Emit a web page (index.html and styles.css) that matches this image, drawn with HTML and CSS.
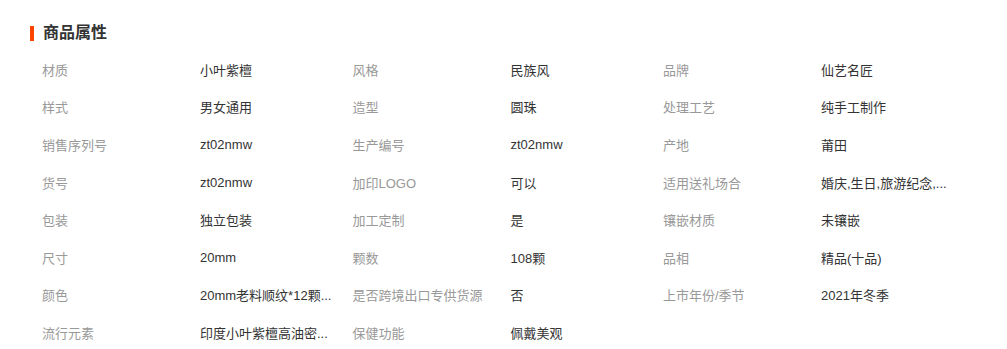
FILE: index.html
```html
<!DOCTYPE html>
<html lang="zh-CN">
<head>
<meta charset="utf-8">
<title>商品属性</title>
<link rel="stylesheet" href="styles.css">
</head>
<body>
<section class="attrs">
  <h2 class="attrs-title"><span class="attrs-bar"></span>商品属性</h2>
  <ul class="attrs-list">
    <li class="attr"><span class="attr-name">材质</span><span class="attr-value">小叶紫檀</span></li>
    <li class="attr"><span class="attr-name">风格</span><span class="attr-value">民族风</span></li>
    <li class="attr"><span class="attr-name">品牌</span><span class="attr-value">仙艺名匠</span></li>
    <li class="attr"><span class="attr-name">样式</span><span class="attr-value">男女通用</span></li>
    <li class="attr"><span class="attr-name">造型</span><span class="attr-value">圆珠</span></li>
    <li class="attr"><span class="attr-name">处理工艺</span><span class="attr-value">纯手工制作</span></li>
    <li class="attr"><span class="attr-name">销售序列号</span><span class="attr-value">zt02nmw</span></li>
    <li class="attr"><span class="attr-name">生产编号</span><span class="attr-value">zt02nmw</span></li>
    <li class="attr"><span class="attr-name">产地</span><span class="attr-value">莆田</span></li>
    <li class="attr"><span class="attr-name">货号</span><span class="attr-value">zt02nmw</span></li>
    <li class="attr"><span class="attr-name">加印LOGO</span><span class="attr-value">可以</span></li>
    <li class="attr"><span class="attr-name">适用送礼场合</span><span class="attr-value" title="婚庆,生日,旅游纪念,商务">婚庆,生日,旅游纪念,...</span></li>
    <li class="attr"><span class="attr-name">包装</span><span class="attr-value">独立包装</span></li>
    <li class="attr"><span class="attr-name">加工定制</span><span class="attr-value">是</span></li>
    <li class="attr"><span class="attr-name">镶嵌材质</span><span class="attr-value">未镶嵌</span></li>
    <li class="attr"><span class="attr-name">尺寸</span><span class="attr-value">20mm</span></li>
    <li class="attr"><span class="attr-name">颗数</span><span class="attr-value">108颗</span></li>
    <li class="attr"><span class="attr-name">品相</span><span class="attr-value">精品(十品)</span></li>
    <li class="attr"><span class="attr-name">颜色</span><span class="attr-value" title="20mm老料顺纹*12颗佛珠">20mm老料顺纹*12颗...</span></li>
    <li class="attr"><span class="attr-name">是否跨境出口专供货源</span><span class="attr-value">否</span></li>
    <li class="attr"><span class="attr-name">上市年份/季节</span><span class="attr-value">2021年冬季</span></li>
    <li class="attr"><span class="attr-name">流行元素</span><span class="attr-value" title="印度小叶紫檀高油密度">印度小叶紫檀高油密...</span></li>
    <li class="attr"><span class="attr-name">保健功能</span><span class="attr-value">佩戴美观</span></li>
  </ul>
</section>
</body>
</html>
```

FILE: styles.css
```css
* { box-sizing: border-box; }
html, body { margin: 0; padding: 0; background: #fff; }
body {
  font-family: "Liberation Sans", Arial, "Noto Sans CJK SC", sans-serif;
  font-size: 13px;
  color: #333;
}
.attrs {
  padding: 25px 0 0 30px;
}
.attrs-title {
  display: flex;
  align-items: center;
  gap: 9px;
  margin: 0;
  height: 16px;
  font-size: 16px;
  line-height: 16px;
  font-weight: bold;
  color: #333;
}
.attrs-bar {
  width: 4px;
  height: 15px;
  background: #ff4400;
}
.attrs-list {
  list-style: none;
  margin: 9.5px 0 0 12px;
  padding: 0;
  display: grid;
  grid-template-columns: repeat(3, 310.5px);
  grid-auto-rows: 37.6px;
}
.attr {
  display: flex;
  align-items: center;
  min-width: 0;
}
.attr-name {
  flex: 0 0 158px;
  color: #999;
  white-space: nowrap;
}
.attr-value {
  flex: 0 0 140px;
  color: #333;
  white-space: nowrap;
}
```
